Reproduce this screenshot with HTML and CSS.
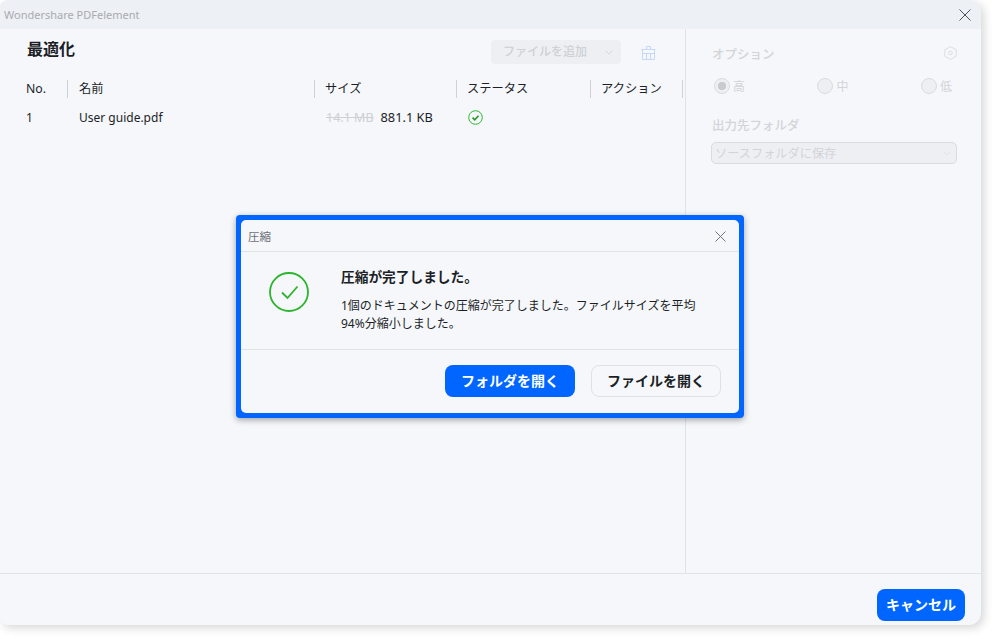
FILE: index.html
```html
<!DOCTYPE html>
<html lang="ja">
<head>
  <meta charset="UTF-8" />
  <title>Wondershare PDFelement</title>
  <link rel="stylesheet" href="styles.css">
</head>
<body>
  <div class="window">
    <div class="titlebar">
      <span class="app-name">Wondershare PDFelement</span>
      <svg class="close" width="12" height="12" viewBox="0 0 12 12"><path d="M.5.5l11 11M11.500.5l-11 11" stroke="#4a4f5c" fill="none"/></svg>
    </div>

    <div class="body">
      <div class="main">
        <div class="main-head">
          <h1>最適化</h1>
          <div class="add-btn"><span class="add-label">ファイルを追加</span>
            <svg width="8" height="5" viewBox="0 0 8 5"><path d="M.5.5L4 4 7.500.5" stroke="#d4d6da" fill="none"/></svg>
          </div>
          <svg class="trash" width="15" height="14" viewBox="0 0 15 14" fill="none" stroke="#c5d9f5"><path d="M5.500 3.500v-3h4v3M.5 3.500h14M1.500 3.500v10h12v-10M1.500 7.500h12M5.500 7.500v6M9.500 7.500v6"/></svg>
        </div>
        <div class="table">
          <div class="cell first">No.</div>
          <div class="cell name-col">名前</div>
          <div class="cell">サイズ</div>
          <div class="cell">ステータス</div>
          <div class="cell">アクション</div>
        </div>
        <div class="table row">
          <div class="val first">1</div>
          <div class="val">User guide.pdf</div>
          <div class="val"><s>14.1 MB</s><span class="new-size">881.1 KB</span></div>
          <div class="val">
            <svg class="ok" width="15" height="15" viewBox="0 0 15 15" fill="none" stroke="#2fb82f"><circle cx="7.500" cy="7.500" r="6.800"/><path d="M4.500 7.700l2.200 2.100 3.800-4" stroke="#249a24" stroke-width="1.600"/></svg>
          </div>
          <div class="val"></div>
        </div>
      </div>

      <div class="side">
        <div class="side-head">
          <span>オプション</span>
          <svg width="13" height="14" viewBox="0 0 13 14" fill="none" stroke="#dcdde0"><path d="M6.500.6l5.700 3.200v6.400l-5.700 3.200L.8 10.200V3.800z"/><circle cx="6.500" cy="7" r="1.800"/></svg>
        </div>
        <div class="radios">
          <div class="radio"><i class="dot on"></i>高</div>
          <div class="radio"><i class="dot"></i>中</div>
          <div class="radio"><i class="dot"></i>低</div>
        </div>
        <div class="side-label">出力先フォルダ</div>
        <div class="select">ソースフォルダに保存
          <svg width="8" height="5" viewBox="0 0 8 5"><path d="M.5.5L4 4 7.500.5" stroke="#e2e3e6" fill="none"/></svg>
        </div>
      </div>
    </div>

    <div class="footer">
      <button class="btn primary cancel">キャンセル</button>
    </div>
  </div>

  <div class="dialog">
    <div class="dialog-inner">
      <div class="dialog-title">
        <span>圧縮</span>
        <svg class="dialog-close" width="11" height="11" viewBox="0 0 11 11"><path d="M.5.5l10 10M10.500.5l-10 10" stroke="#6e7380" fill="none"/></svg>
      </div>
      <div class="dialog-body">
        <svg class="big-ok" width="40" height="40" viewBox="0 0 40 40" fill="none" stroke="#2bb52b" stroke-width="1.800"><circle cx="20" cy="20" r="19"/><path d="M13 20.500l5.500 5.500 10-11.500"/></svg>
        <div class="msg">
          <h2>圧縮が完了しました。</h2>
          <p>1個のドキュメントの圧縮が完了しました。ファイルサイズを平均94%分縮小しました。</p>
        </div>
      </div>
      <div class="dialog-foot">
        <button class="btn primary">フォルダを開く</button>
        <button class="btn plain">ファイルを開く</button>
      </div>
    </div>
  </div>
</body>
</html>
```

FILE: styles.css
```css
body {
  margin: 0;
  width: 995px;
  height: 639px;
  overflow: hidden;
  background: #fff;
  color: #1c1f26;
  font-family: "Noto Sans", "Noto Sans CJK JP", sans-serif;
  font-size: 12px;
}
h1, h2, p { margin: 0; }
button { font-family: inherit; border: none; }

.window {
  width: 981px;
  height: 625px;
  display: flex;
  flex-direction: column;
  background: #f5f7fb;
  border-radius: 8px 12px 12px 8px;
  box-shadow: 3px 3px 10px rgba(0, 0, 0, 0.16);
}
.titlebar {
  height: 29px;
  flex: none;
  display: flex;
  align-items: center;
  justify-content: space-between;
  padding: 0 10px 0 4px;
  background: #edf0f5;
  border-radius: 8px 12px 0 0;
}
.app-name { color: #a9abb0; font-size: 11px; }

.body { flex: 1; display: flex; min-height: 0; }
.main { flex: none; width: 658px; border-right: 1px solid #e1e3e8; padding-left: 27px; }
.main-head { height: 46px; display: flex; align-items: center; }
.main-head h1 { font-size: 16px; font-weight: 700; flex: 1; margin-bottom: 8px; }
.add-btn {
  width: 130px;
  height: 24px;
  box-sizing: border-box;
  display: flex;
  align-items: center;
  justify-content: space-between;
  padding: 0 8px 0 12px;
  margin-right: 20px;
  background: #edeff3;
  border-radius: 4px;
  color: #cfd1d5;
  font-size: 12px;
  font-weight: 500;
}
.add-label { padding-bottom: 2px; }
.trash { margin: 2px 29px 0 0; }

.table {
  display: grid;
  grid-template-columns: 41px 247px 142px 134px 92px;
  align-items: center;
  margin-top: 5px;
  font-size: 12.250px;
}
.cell { height: 18px; line-height: 18px; padding-left: 10px; border-right: 1px solid #cfd1d6; box-sizing: border-box; }
.cell.name-col { padding-left: 11px; }
.row { margin-top: 0; height: 38px; }
.val { padding-left: 11px; display: flex; align-items: center; font-size: 12px; }
.first { padding-left: 0; margin-left: -1px; }
s { color: #cfd0d3; font-size: 12.500px; }
.new-size { margin-left: 7px; font-size: 12.800px; }

.side { flex: 1; padding: 0 24px 0 25px; color: #d3d4d7; font-weight: 500; }
.side-head { height: 48px; display: flex; align-items: center; justify-content: space-between; font-size: 12.500px; padding-left: 1px; }
.radios { display: flex; justify-content: space-between; height: 16px; margin-top: 1px; padding-left: 3px; margin-right: 5px; }
.radio { display: flex; align-items: center; gap: 3px; font-size: 12px; font-weight: 400; }
.dot { width: 14px; height: 14px; border-radius: 50%; border: 1px solid #d9dbdf; background: #edeff3; display: block; }
.dot.on { background: radial-gradient(circle, #c9cbcf 0 4px, #edeff3 4.500px); }
.side-label { margin-top: 23px; padding-left: 1px; font-size: 12.500px; height: 18px; line-height: 18px; }
.select {
  margin-top: 7px;
  height: 22px;
  display: flex;
  align-items: center;
  justify-content: space-between;
  box-sizing: border-box;
  padding: 0 5px 0 3px;
  border: 1px solid #d9dbdf;
  border-radius: 5px;
  background: #edeff3;
  font-weight: 400;
  font-size: 12.200px;
}

.footer {
  height: 52px;
  flex: none;
  box-sizing: border-box;
  border-top: 1px solid #e1e3e8;
  display: flex;
  align-items: flex-end;
  justify-content: flex-end;
  padding: 0 16px 4px 0;
}
.btn {
  height: 32px;
  border-radius: 8px;
  font-size: 14px;
  font-weight: 700;
  padding: 0 0 3px;
}
.primary { background: #0066ff; color: #fff; }
.plain { background: #f5f7fb; color: #1c1f26; border: 1px solid #dfe1e6; box-sizing: border-box; }
.cancel { width: 88px; }

.dialog {
  position: absolute;
  left: 236px;
  top: 215px;
  width: 508px;
  height: 203px;
  box-sizing: border-box;
  padding: 5px;
  border-radius: 4px;
  background: #0066ff;
  box-shadow: 0 2px 6px rgba(0, 0, 0, 0.35);
}
.dialog-inner {
  height: 100%;
  display: flex;
  flex-direction: column;
  background: #f5f7fb;
  border-radius: 5px;
}
.dialog-title {
  height: 32px;
  flex: none;
  box-sizing: border-box;
  border-bottom: 1px solid #e1e3e8;
  display: flex;
  align-items: center;
  justify-content: space-between;
  padding: 0 13px 0 7px;
  color: #6d7078;
  font-size: 11.500px;
}
.dialog-close { margin-top: 2px; }
.dialog-body {
  height: 98px;
  flex: none;
  box-sizing: border-box;
  border-bottom: 1px solid #e1e3e8;
  display: flex;
  padding: 20px 40px 0 28px;
}
.big-ok { flex: none; margin-right: 32px; }
.msg h2 { font-size: 13.700px; font-weight: 700; line-height: 16px; margin-top: -3px; }
.msg p { font-size: 12px; line-height: 18px; margin-top: 12px; }
.dialog-foot {
  flex: 1;
  display: flex;
  justify-content: flex-end;
  align-items: flex-start;
  gap: 16px;
  padding: 15px 18px 0 0;
}
.dialog-foot .btn { width: 130px; }
```
